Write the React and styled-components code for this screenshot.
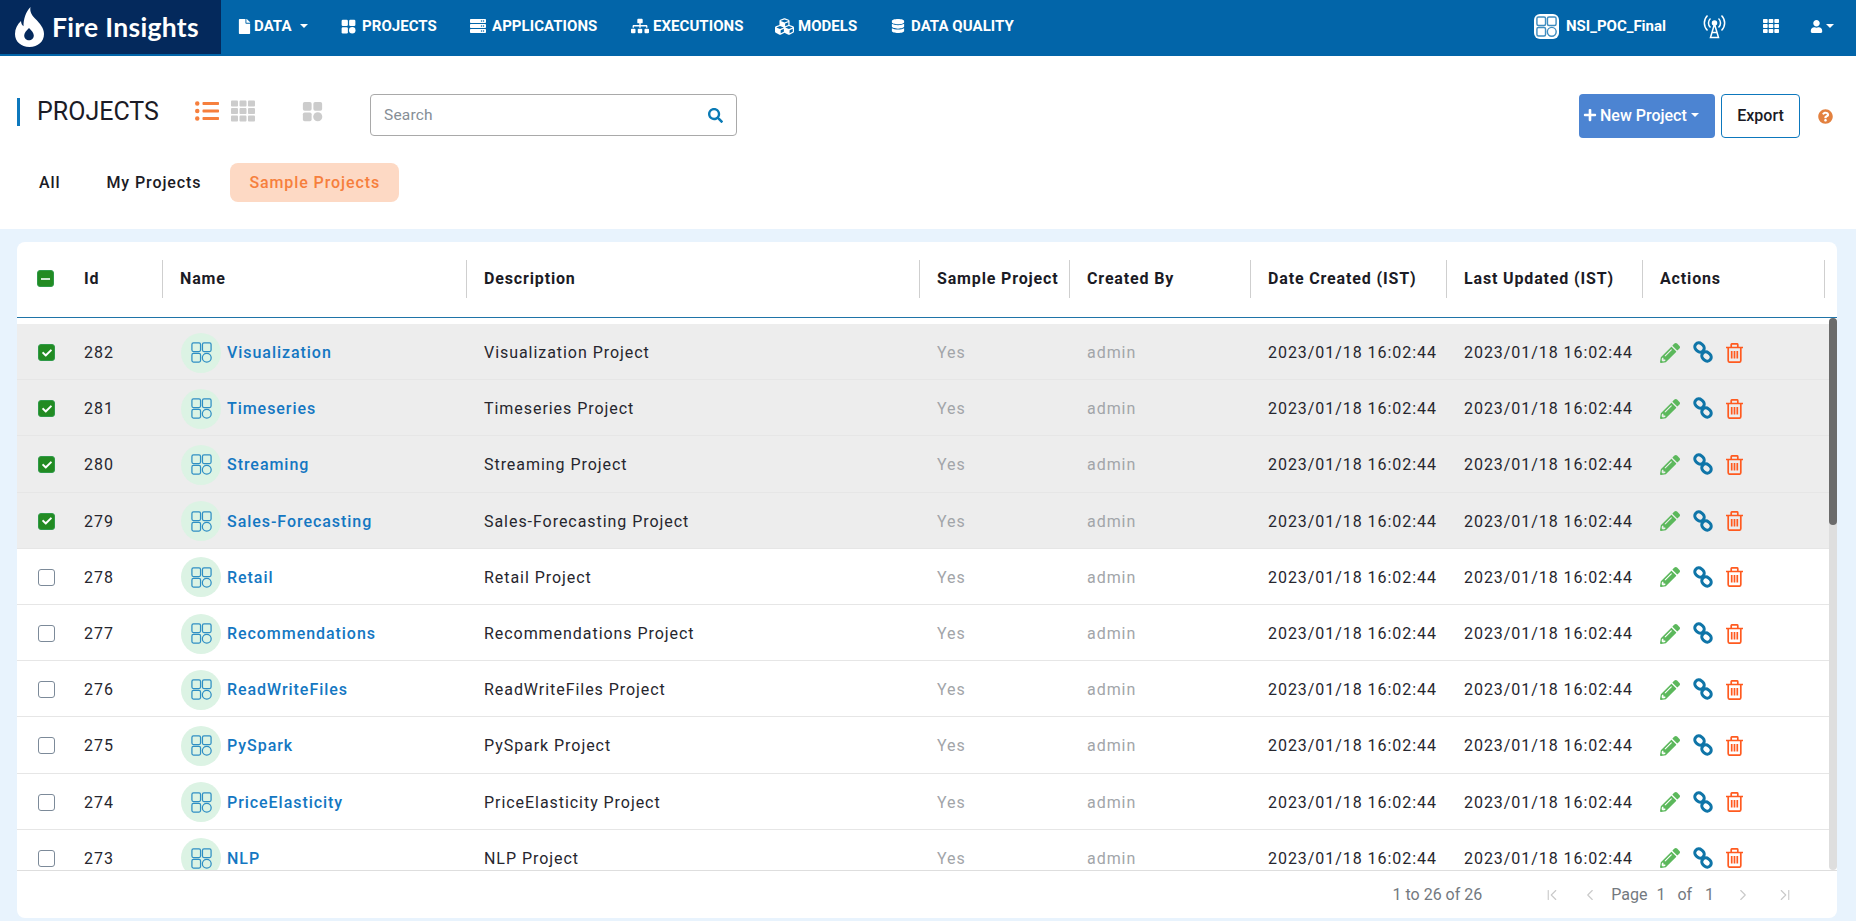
import React from 'react';
import styled, { createGlobalStyle } from 'styled-components';
import {
  FaFile, FaServer, FaSitemap, FaCubes, FaDatabase, FaTh, FaUser, FaQuestionCircle,
  FaSearch, FaListUl, FaPencilAlt, FaPlus, FaCheck,
} from 'react-icons/fa';
import { ChevronFirst, ChevronLeft, ChevronRight, ChevronLast } from 'lucide-react';

const GlobalStyle = createGlobalStyle`
  html, body {
    margin: 0;
    height: 100%;
    overflow: hidden;
    background: #e8f3fd;
    font-family: Roboto, "Liberation Sans", sans-serif;
  }
  * { box-sizing: border-box; }
`;

const COLUMNS = '50px 96px 304px 453px 150px 181px 196px 196px 182px 1fr';

const Page = styled.div`
  height: 921px;
  display: flex;
  flex-direction: column;
`;

const NavBar = styled.header`
  height: 56px;
  flex: none;
  background: #0265a9;
  display: flex;
  align-items: flex-start;
  color: #fff;
`;

const Brand = styled.div`
  width: 221px;
  height: 54px;
  background: #04295c;
  display: flex;
  align-items: center;
  gap: 7px;
  padding-left: 14px;
`;

const BrandName = styled.span`
  font-family: Lato, sans-serif;
  font-weight: 700;
  font-size: 26.5px;
  letter-spacing: 0.3px;
`;

const NavItems = styled.nav`
  height: 52px;
  display: flex;
  align-items: center;
  margin-left: 16px;
`;

const NavItem = styled.a`
  display: flex;
  align-items: center;
  gap: ${(p) => p.$gap || 6}px;
  width: ${(p) => p.$width}px;
  font-size: 15px;
  font-weight: 700;
  letter-spacing: 0.05px;
  white-space: nowrap;
  svg { flex: none; }
`;

const Caret = styled.span`
  display: inline-block;
  border-left: 4px solid transparent;
  border-right: 4px solid transparent;
  border-top: 4px solid ${(p) => p.$color || '#fff'};
  margin-left: ${(p) => p.$gap || 8}px;
`;

const NavRight = styled.div`
  height: 52px;
  margin-left: auto;
  display: flex;
  align-items: center;
  padding-right: 22px;
`;

const WorkspaceIcon = styled.span`
  width: 25px;
  height: 25px;
  border-radius: 6px;
  background: #fff;
  display: flex;
  align-items: center;
  justify-content: center;
`;

const WorkspaceName = styled.span`
  font-size: 15px;
  font-weight: 700;
  margin-left: 7px;
  margin-right: 37px;
`;

const NavIconSlot = styled.span`
  display: flex;
  align-items: center;
  margin-right: ${(p) => p.$right || 0}px;
`;

const TopArea = styled.section`
  height: 173px;
  flex: none;
  background: #fff;
  padding: 38px 23px 0 17px;
`;

const ToolRow = styled.div`
  display: flex;
  align-items: flex-start;
`;

const Heading = styled.h1`
  margin: 4px 0 0;
  height: 28px;
  width: 178px;
  border-left: 3px solid #0d78bd;
  padding-left: 17px;
  font-size: 25px;
  line-height: 28px;
  font-weight: 400;
  color: #1b1b25;
`;

const ViewIcon = styled.span`
  display: flex;
  height: 34px;
  align-items: center;
  color: ${(p) => p.$color};
  margin-right: ${(p) => p.$right}px;
`;

const SearchBox = styled.div`
  width: 367px;
  height: 42px;
  border: 1px solid #a9a9a9;
  border-radius: 4px;
  display: flex;
  align-items: center;
  justify-content: space-between;
  padding: 0 13px;
  font-size: 15.500px;
  color: #868e96;
  letter-spacing: 0.2px;
`;

const ToolRight = styled.div`
  margin-left: auto;
  display: flex;
  align-items: center;
`;

const NewButton = styled.button`
  width: 136px;
  height: 44px;
  border: 0;
  border-radius: 4px;
  background: #4c84d2;
  color: #fff;
  font: 500 16px Roboto, sans-serif;
  display: flex;
  align-items: center;
  gap: 3px;
  padding: 0 0 2px 4px;
`;

const ExportButton = styled.button`
  width: 79px;
  height: 44px;
  margin-left: 6px;
  padding: 0 0 2px;
  border: 1px solid #0d78bd;
  border-radius: 4px;
  background: #fff;
  color: #1b1b25;
  font: 500 16px Roboto, sans-serif;
`;

const HelpIcon = styled.span`
  display: flex;
  margin-left: 18px;
  color: #e3813f;
`;

const Tabs = styled.div`
  display: flex;
  align-items: center;
  gap: 8px;
  margin-top: 25px;
  padding-left: 3px;
`;

const Tab = styled.div`
  height: 39px;
  display: flex;
  align-items: center;
  padding: 0 19px;
  margin-left: ${(p) => (p.$active ? 2 : 0)}px;
  border-radius: 8px;
  font-size: 16px;
  font-weight: 500;
  letter-spacing: 0.9px;
  color: ${(p) => (p.$active ? '#f67f3d' : '#1b1b25')};
  background: ${(p) => (p.$active ? '#fdd9c4' : 'transparent')};
`;

const Content = styled.main`
  flex: 1;
  min-height: 0;
  padding: 13px 19px 3px 17px;
`;

const Card = styled.div`
  height: 100%;
  background: #fff;
  border-radius: 8px;
  display: flex;
  flex-direction: column;
  overflow: hidden;
`;

const HeaderRow = styled.div`
  height: 76px;
  flex: none;
  display: grid;
  grid-template-columns: ${COLUMNS};
  align-items: center;
  border-bottom: 1.5px solid #1f74a8;
  padding-bottom: 2px;
`;

const HeaderCell = styled.div`
  height: 38px;
  display: flex;
  align-items: center;
  padding-left: 17px;
  border-right: 1.5px solid #cfcfcf;
  font-size: 16px;
  font-weight: 700;
  letter-spacing: 0.85px;
  color: #1b1b25;
  white-space: nowrap;
`;

const TableBody = styled.div`
  flex: 1;
  min-height: 0;
  display: flex;
`;

const Rows = styled.div`
  flex: 1;
  min-width: 0;
  overflow: hidden;
  padding-top: 6px;
`;

const ScrollTrack = styled.div`
  width: 8px;
  flex: none;
  background: #dedede;
  border-radius: 4px;
`;

const ScrollThumb = styled.div`
  height: 207px;
  background: #6b6b6b;
  border-radius: 4px;
`;

const Row = styled.div`
  height: 56.200px;
  padding-top: 2px;
  display: grid;
  grid-template-columns: ${COLUMNS};
  align-items: center;
  background: ${(p) => (p.$selected ? '#ededed' : '#fff')};
  border-bottom: 1.5px solid #e6e6e6;
  font-size: 16px;
  letter-spacing: 0.95px;
  color: #26262e;
`;

const Cell = styled.div`
  padding-left: 17px;
  white-space: nowrap;
  color: ${(p) => (p.$muted ? '#a2a5a9' : 'inherit')};
`;

const CheckCell = styled.div`
  display: flex;
  padding-left: ${(p) => p.$pad}px;
`;

const CheckBox = styled.span`
  width: 17px;
  height: 17px;
  border-radius: 3px;
  display: flex;
  align-items: center;
  justify-content: center;
  color: #fff;
  background: ${(p) => (p.$checked ? '#228b22' : '#fff')};
  border: 1.5px solid ${(p) => (p.$checked ? '#2f9a4a' : '#7c8a99')};
`;

const MinusMark = styled.span`
  width: 9px;
  height: 2px;
  background: #cfe8d2;
`;

const NameCell = styled.div`
  display: flex;
  align-items: center;
  gap: 6px;
  padding-left: 18px;
`;

const Avatar = styled.span`
  width: 40px;
  height: 40px;
  border-radius: 50%;
  background: #dcf3e4;
  display: flex;
  align-items: center;
  justify-content: center;
`;

const NameLink = styled.a`
  color: #1477c2;
  font-weight: 500;
`;

const Actions = styled.div`
  display: flex;
  align-items: center;
  gap: 12px;
  padding-left: 17px;
`;

const ActionIcon = styled.span`
  display: flex;
  color: ${(p) => p.$color};
  margin-top: ${(p) => p.$top || 0}px;
`;

const Footer = styled.footer`
  height: 48px;
  flex: none;
  border-top: 1.5px solid #dedede;
  display: flex;
  align-items: center;
  justify-content: flex-end;
  padding-right: 43px;
  font-size: 16px;
  color: #737980;
`;

const PageCount = styled.span`
  margin-right: 61px;
`;

const PagerIcon = styled.span`
  display: flex;
  color: #c9c9c9;
  margin-right: ${(p) => p.$right || 0}px;
`;

const PageLabel = styled.span`
  margin-right: ${(p) => p.$right || 5}px;
`;

const ProjectsGlyph = ({ size = 18, color = 'currentColor', width = 1.3 }) => (
  <svg width={size} height={size} viewBox="0 0 24 24" fill="none" stroke={color} strokeWidth={width}>
    <rect x="2" y="2" width="9" height="9" rx="1.6" />
    <rect x="13" y="2" width="9" height="9" rx="1.6" />
    <rect x="2" y="13" width="9" height="9" rx="1.6" />
    <circle cx="17.5" cy="17.5" r="4.6" />
  </svg>
);

const ProjectsSolid = ({ size = 15, color = 'currentColor' }) => (
  <svg width={size} height={size} viewBox="0 0 24 24" fill={color}>
    <rect x="1" y="1" width="10" height="10" rx="2" />
    <rect x="13" y="1" width="10" height="10" rx="2" />
    <rect x="1" y="13" width="10" height="10" rx="2" />
    <circle cx="18" cy="18" r="5.2" />
  </svg>
);

const FlameLogo = () => (
  <svg width="31" height="40" viewBox="0 0 31 40" fill="#fff">
    <path
      fillRule="evenodd"
      d="M16.500 0c-.8 4.500.8 7.500 4.500 11.500 5 5 9 9.500 9 15.500 0 7.500-6 13-14.500 13S1 34.500 1 27c0-5 2.200-9.500 6-13 .2 2.500 1 4.200 2.500 5.300C9.500 12 11.500 5.500 16.500 0zM15 21c-2.700 2.500-4.800 5-4.800 7.500 0 2.800 2.200 4.800 4.800 4.800s4.800-2 4.800-4.800c0-2.500-2.100-5-4.800-7.500z"
    />
  </svg>
);

const TowerGlyph = () => (
  <svg width="23" height="25" viewBox="0 0 23 25" fill="none" stroke="#fff" strokeWidth="1.5">
    <circle cx="11.500" cy="9" r="2" fill="#fff" />
    <path d="M11.500 10 7.500 23.500h8L11.500 10M9 18.500h5M8 23.500h7" />
    <path d="M7.500 4.500a6 6 0 0 0 0 9M15.500 4.500a6 6 0 0 1 0 9" />
    <path d="M4.500 1.500a10.500 10.500 0 0 0 0 15M18.500 1.500a10.500 10.500 0 0 1 0 15" />
  </svg>
);

const ChainGlyph = () => (
  <svg width="22" height="22" viewBox="0 0 22 22" fill="none" stroke="currentColor" strokeWidth="3">
    <rect x="2.500" y="2.500" width="10" height="8" rx="4" transform="rotate(42 7.500 6.500)" />
    <rect x="9.500" y="11.500" width="10" height="8" rx="4" transform="rotate(42 14.500 15.500)" />
  </svg>
);

const TrashGlyph = () => (
  <svg width="17" height="20" viewBox="0 0 17 20" fill="none" stroke="currentColor" strokeWidth="1.7">
    <path d="M0 4.500h17M5.200 4.500V1.800q0-1 1-1h4.600q1 0 1 1v2.700" />
    <path d="M2.200 4.500v13q0 1.700 1.700 1.700h9.200q1.700 0 1.700-1.700v-13" />
    <path d="M5.700 8v7.500M8.500 8v7.500M11.300 8v7.500" />
  </svg>
);

const projects = [
  { id: 282, name: 'Visualization', selected: true },
  { id: 281, name: 'Timeseries', selected: true },
  { id: 280, name: 'Streaming', selected: true },
  { id: 279, name: 'Sales-Forecasting', selected: true },
  { id: 278, name: 'Retail' },
  { id: 277, name: 'Recommendations' },
  { id: 276, name: 'ReadWriteFiles' },
  { id: 275, name: 'PySpark' },
  { id: 274, name: 'PriceElasticity' },
  { id: 273, name: 'NLP' },
];

const headers = ['Id', 'Name', 'Description', 'Sample Project', 'Created By', 'Date Created (IST)', 'Last Updated (IST)', 'Actions'];

export default function App() {
  return (
    <Page>
      <GlobalStyle />
      <NavBar>
        <Brand>
          <FlameLogo />
          <BrandName>Fire Insights</BrandName>
        </Brand>
        <NavItems>
          <NavItem $width={104} $gap={2}><FaFile size={15} />DATA<Caret $gap={6} /></NavItem>
          <NavItem $width={129}><ProjectsSolid />PROJECTS</NavItem>
          <NavItem $width={161}><FaServer size={16} />APPLICATIONS</NavItem>
          <NavItem $width={144} $gap={4}><FaSitemap size={18} />EXECUTIONS</NavItem>
          <NavItem $width={116} $gap={4}><FaCubes size={19} />MODELS</NavItem>
          <NavItem><FaDatabase size={14} />DATA QUALITY</NavItem>
        </NavItems>
        <NavRight>
          <WorkspaceIcon><ProjectsGlyph size={23} color="#3f8dc0" width={1.5} /></WorkspaceIcon>
          <WorkspaceName>NSI_POC_Final</WorkspaceName>
          <NavIconSlot $right={37}><TowerGlyph /></NavIconSlot>
          <NavIconSlot $right={31}><FaTh size={16} /></NavIconSlot>
          <NavIconSlot><FaUser size={13} /><Caret $gap={3} /></NavIconSlot>
        </NavRight>
      </NavBar>

      <TopArea>
        <ToolRow>
          <Heading>PROJECTS</Heading>
          <ViewIcon $color="#f67f3d" $right={12}><FaListUl size={24} /></ViewIcon>
          <ViewIcon $color="#cccccc" $right={47}><FaTh size={24} /></ViewIcon>
          <ViewIcon $color="#cccccc" $right={47}><ProjectsSolid size={21} /></ViewIcon>
          <SearchBox>Search<FaSearch size={15} color="#0a7ab5" /></SearchBox>
          <ToolRight>
            <NewButton><FaPlus size={14} />New Project<Caret $gap={1} /></NewButton>
            <ExportButton>Export</ExportButton>
            <HelpIcon><FaQuestionCircle size={15} /></HelpIcon>
          </ToolRight>
        </ToolRow>
        <Tabs>
          <Tab>All</Tab>
          <Tab>My Projects</Tab>
          <Tab $active>Sample Projects</Tab>
        </Tabs>
      </TopArea>

      <Content>
        <Card>
          <HeaderRow>
            <CheckCell $pad={20}><CheckBox $checked><MinusMark /></CheckBox></CheckCell>
            {headers.map((h) => <HeaderCell key={h}>{h}</HeaderCell>)}
          </HeaderRow>
          <TableBody>
            <Rows>
              {projects.map((p) => (
                <Row key={p.id} $selected={p.selected}>
                  <CheckCell $pad={21}>
                    <CheckBox $checked={p.selected}>{p.selected && <FaCheck size={10} />}</CheckBox>
                  </CheckCell>
                  <Cell>{p.id}</Cell>
                  <NameCell>
                    <Avatar><ProjectsGlyph size={23} color="#2f8fc4" /></Avatar>
                    <NameLink>{p.name}</NameLink>
                  </NameCell>
                  <Cell>{p.name} Project</Cell>
                  <Cell $muted>Yes</Cell>
                  <Cell $muted>admin</Cell>
                  <Cell>2023/01/18 16:02:44</Cell>
                  <Cell>2023/01/18 16:02:44</Cell>
                  <Actions>
                    <ActionIcon $color="#5cb85c"><FaPencilAlt size={20} /></ActionIcon>
                    <ActionIcon $color="#0f75a8" $top={-1}><ChainGlyph /></ActionIcon>
                    <ActionIcon $color="#ff5a1f"><TrashGlyph /></ActionIcon>
                  </Actions>
                </Row>
              ))}
            </Rows>
            <ScrollTrack><ScrollThumb /></ScrollTrack>
          </TableBody>
          <Footer>
            <PageCount>1 to 26 of 26</PageCount>
            <PagerIcon $right={20}><ChevronFirst size={18} strokeWidth={1.5} /></PagerIcon>
            <PagerIcon $right={12}><ChevronLeft size={18} strokeWidth={1.5} /></PagerIcon>
            <PageLabel>Page</PageLabel>
            <PageLabel $right={8}>&nbsp;1</PageLabel>
            <PageLabel>&nbsp;of</PageLabel>
            <PageLabel $right={20}>&nbsp;&nbsp;1</PageLabel>
            <PagerIcon $right={24}><ChevronRight size={18} strokeWidth={1.5} /></PagerIcon>
            <PagerIcon><ChevronLast size={18} strokeWidth={1.5} /></PagerIcon>
          </Footer>
        </Card>
      </Content>
    </Page>
  );
}
